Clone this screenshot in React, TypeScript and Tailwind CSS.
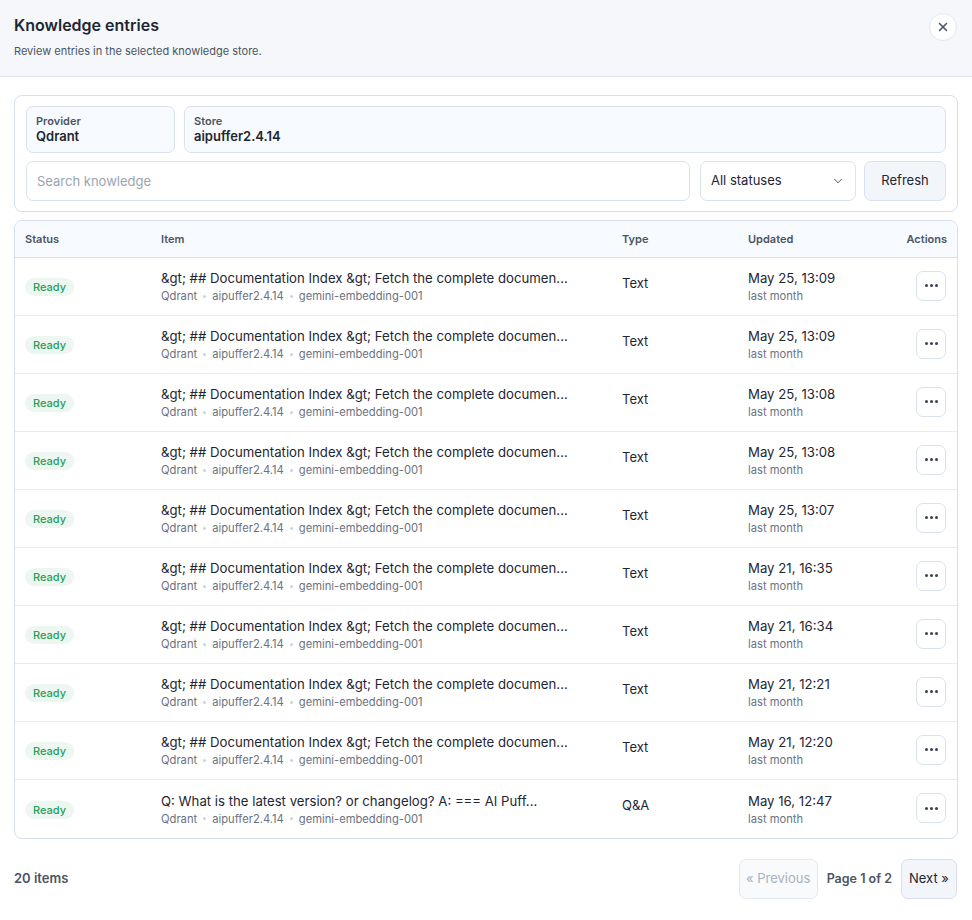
import { ChevronDown, X } from 'lucide-react';

const ROWS = [
  { title: '&gt; ## Documentation Index &gt; Fetch the complete documen...', type: 'Text', date: 'May 25, 13:09' },
  { title: '&gt; ## Documentation Index &gt; Fetch the complete documen...', type: 'Text', date: 'May 25, 13:09' },
  { title: '&gt; ## Documentation Index &gt; Fetch the complete documen...', type: 'Text', date: 'May 25, 13:08' },
  { title: '&gt; ## Documentation Index &gt; Fetch the complete documen...', type: 'Text', date: 'May 25, 13:08' },
  { title: '&gt; ## Documentation Index &gt; Fetch the complete documen...', type: 'Text', date: 'May 25, 13:07' },
  { title: '&gt; ## Documentation Index &gt; Fetch the complete documen...', type: 'Text', date: 'May 21, 16:35' },
  { title: '&gt; ## Documentation Index &gt; Fetch the complete documen...', type: 'Text', date: 'May 21, 16:34' },
  { title: '&gt; ## Documentation Index &gt; Fetch the complete documen...', type: 'Text', date: 'May 21, 12:21' },
  { title: '&gt; ## Documentation Index &gt; Fetch the complete documen...', type: 'Text', date: 'May 21, 12:20' },
  { title: 'Q: What is the latest version? or changelog? A: === AI Puff...', type: 'Q&A', date: 'May 16, 12:47' },
];

const COLS = 'grid grid-cols-[136px_461px_126px_1fr_110px] items-center';

export default function App() {
  return (
    <div className="min-h-screen bg-white text-[#1f2937] font-['Inter',sans-serif]">
      {/* Header */}
      <div className="flex items-start justify-between bg-[#f5f7fa] border-b border-[#dde3ec] h-[77px] pl-[14px] pr-[14px] pt-[14px]">
        <div>
          <h1 className="text-[16px] leading-[22px] font-semibold text-[#1e2633]">Knowledge entries</h1>
          <p className="mt-[8px] text-[11px] leading-[14px] text-[#4b5563]">Review entries in the selected knowledge store.</p>
        </div>
        <button className="w-[28px] h-[28px] -mt-[1px] mr-[1px] rounded-full bg-white border border-[#e2e8f0] flex items-center justify-center text-[#4b5563]">
          <X className="w-[14px] h-[14px]" strokeWidth={2.6} />
        </button>
      </div>

      <div className="px-[14px] pt-[18px]">
        {/* Filters */}
        <div className="border border-[#d6dfeb] rounded-[8px] px-[11px] py-[10px] flex flex-col gap-[8px]">
          <div className="flex gap-[9px]">
            <div className="w-[149px] h-[47px] rounded-[7px] border border-[#d9e2ee] bg-[#f7faff] px-[9px] pt-[7px]">
              <div className="text-[11px] leading-[14px] font-semibold text-[#4b5563]">Provider</div>
              <div className="text-[13px] leading-[17px] font-semibold text-[#1e2633]">Qdrant</div>
            </div>
            <div className="flex-1 h-[47px] rounded-[7px] border border-[#d9e2ee] bg-[#f7faff] px-[9px] pt-[7px]">
              <div className="text-[11px] leading-[14px] font-semibold text-[#4b5563]">Store</div>
              <div className="text-[13px] leading-[17px] font-semibold text-[#1e2633]">aipuffer2.4.14</div>
            </div>
          </div>
          <div className="flex gap-[10px]">
            <input
              placeholder="Search knowledge"
              className="flex-1 h-[40px] rounded-[7px] border border-[#d9e2ee] px-[10px] text-[13px] placeholder-[#9ca3af] outline-none"
            />
            <div className="w-[156px] h-[40px] rounded-[7px] border border-[#d9e2ee] px-[10px] flex items-center justify-between text-[13px] text-[#1e2633]">
              <span>All statuses</span>
              <ChevronDown className="w-[14px] h-[14px] text-[#6b7280]" strokeWidth={1.8} />
            </div>
            <button className="w-[82px] h-[40px] -ml-[2px] rounded-[7px] border border-[#d9e2ee] bg-[#f2f5fa] text-[13px] text-[#1e2633]">
              Refresh
            </button>
          </div>
        </div>

        {/* Table */}
        <div className="mt-[8px] border border-[#d6dfeb] rounded-[8px] overflow-hidden">
          <div className={`${COLS} h-[37px] bg-[#f7faff] border-b border-[#d6dfeb] text-[11px] font-semibold text-[#4b5563]`}>
            <div className="pl-[10px]">Status</div>
            <div className="pl-[10px]">Item</div>
            <div className="pl-[10px]">Type</div>
            <div className="pl-[10px]">Updated</div>
            <div className="pr-[10px] text-right">Actions</div>
          </div>
          {ROWS.map((row, i) => (
            <div key={i} className={`${COLS} h-[58px] ${i < ROWS.length - 1 ? 'border-b border-[#e7ecf3]' : ''}`}>
              <div className="pl-[10px] -mt-[3px]">
                <span className="inline-flex items-center h-[18px] px-[8px] rounded-full bg-[#edf6f0] text-[11px] font-medium text-[#23a058]">
                  Ready
                </span>
              </div>
              <div className="pl-[10px]">
                <div className="text-[13.2px] leading-[18px] text-[#1e2633] whitespace-nowrap">{row.title}</div>
                <div className="mt-[1px] flex items-center gap-[6px] text-[11.2px] leading-[16px] text-[#6b7280]">
                  <span>Qdrant</span>
                  <span className="w-[3px] h-[3px] rounded-full bg-[#cbd2db]" />
                  <span>aipuffer2.4.14</span>
                  <span className="w-[3px] h-[3px] rounded-full bg-[#cbd2db]" />
                  <span>gemini-embedding-001</span>
                </div>
              </div>
              <div className="pl-[10px] -mt-[6px] text-[13px] text-[#1e2633]">{row.type}</div>
              <div className="pl-[10px]">
                <div className="text-[13.2px] leading-[18px] text-[#1e2633]">{row.date}</div>
                <div className="mt-[1px] text-[11.2px] leading-[16px] text-[#6b7280]">last month</div>
              </div>
              <div className="pr-[11px] -mt-[2px] flex justify-end">
                <button className="w-[30px] h-[30px] rounded-[7px] border border-[#d9e2ee] bg-white flex items-center justify-center gap-[2px]">
                  <span className="w-[3px] h-[3px] rounded-full bg-[#374151]" />
                  <span className="w-[3px] h-[3px] rounded-full bg-[#374151]" />
                  <span className="w-[3px] h-[3px] rounded-full bg-[#374151]" />
                </button>
              </div>
            </div>
          ))}
        </div>

        {/* Footer */}
        <div className="mt-[20px] flex items-center justify-between">
          <div className="text-[13px] font-semibold text-[#4b5563]">20 items</div>
          <div className="flex items-center gap-[9px] mr-[1px]">
            <button className="w-[79px] h-[40px] rounded-[7px] border border-[#e3e9f1] bg-[#f8fafc] text-[13px] text-[#a9b1bc]">
              « Previous
            </button>
            <span className="text-[12.5px] font-semibold text-[#4b5563]">Page 1 of 2</span>
            <button className="w-[56px] h-[40px] rounded-[7px] border border-[#d6dfeb] bg-[#f2f5fa] text-[13px] text-[#1e2633]">
              Next »
            </button>
          </div>
        </div>
      </div>
    </div>
  );
}
